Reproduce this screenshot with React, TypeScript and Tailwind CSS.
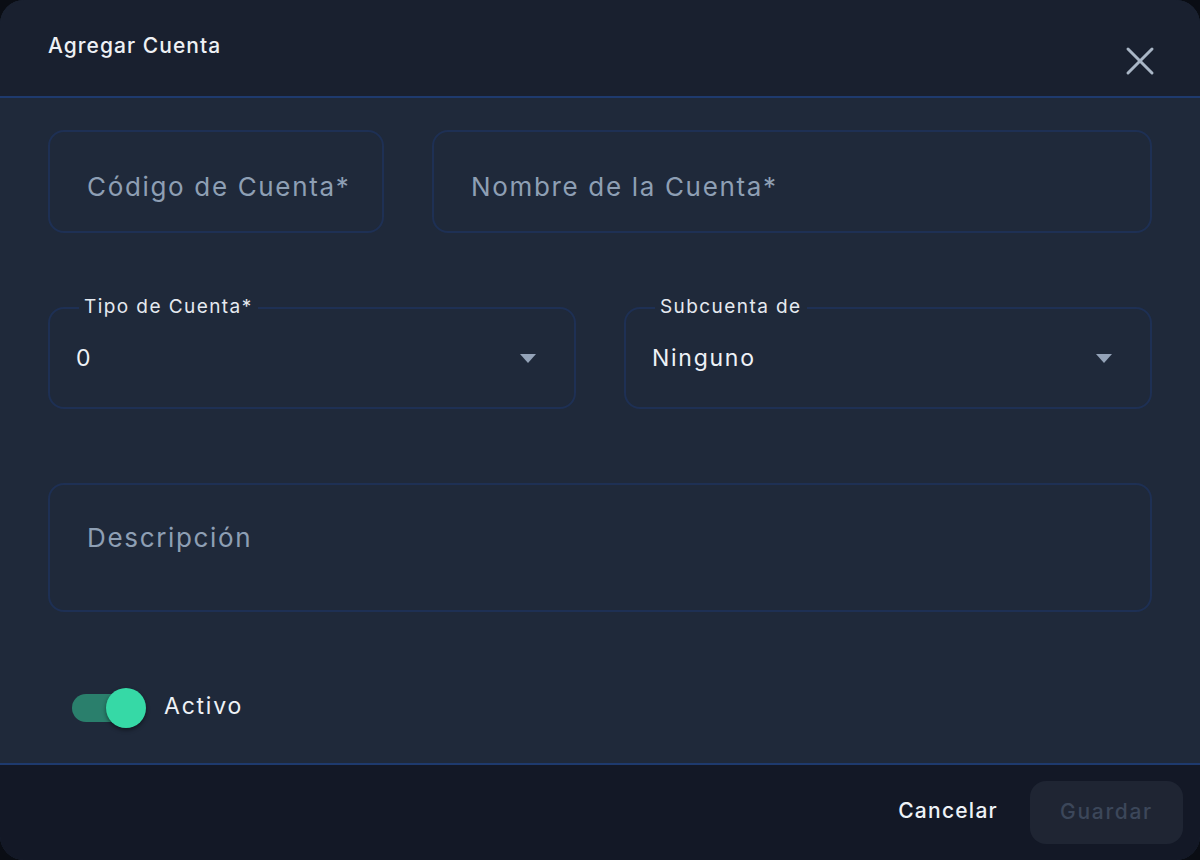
import { X } from 'lucide-react';

const font = { fontFamily: 'Inter, "DejaVu Sans", sans-serif' };

function Caret() {
  return (
    <svg width="16" height="9" viewBox="0 0 16 9" className="shrink-0">
      <path d="M0 0 L16 0 L8 9 Z" fill="#94a3b8" />
    </svg>
  );
}

function TextField({ label, className }: { label: string; className?: string }) {
  return (
    <div
      className={`flex h-[103px] items-center rounded-2xl border-2 border-[#1e3054] pl-[37px] pt-[10px] ${className ?? ''}`}
    >
      <span className="text-[26px] tracking-[0.064em] text-[#8e9fb4]">{label}</span>
    </div>
  );
}

function SelectField({ label, value }: { label: string; value: string }) {
  return (
    <div className="relative flex h-[102px] flex-1 items-center justify-between rounded-2xl border-2 border-[#1e3054] pl-[26px] pr-[38px]">
      <span className="absolute left-[29px] top-[-13px] bg-[#1f293a] px-[5px] text-[19px] leading-[22px] tracking-[0.075em] text-[#e5e9f0]">
        {label}
      </span>
      <span className="text-[23px] tracking-[0.075em] text-[#eef2f7]">{value}</span>
      <Caret />
    </div>
  );
}

export default function App() {
  return (
    <div className="h-[860px] w-[1200px] bg-[#0a0d14]" style={font}>
      <div className="flex h-full w-full flex-col overflow-hidden rounded-[24px] bg-[#1f293a]">
        {/* Header */}
        <div className="flex h-[98px] shrink-0 items-start justify-between border-b-2 border-[#1e3a6e] bg-[#19202f] pl-12 pr-[36px]">
          <h2 className="mt-[32px] text-[21px] font-medium leading-[28px] tracking-[0.05em] text-[#eef1f5]">
            Agregar Cuenta
          </h2>
          <button className="mt-[37px] text-[#a9b6c6]">
            <X className="h-12 w-12" strokeWidth={1.5} />
          </button>
        </div>

        {/* Body */}
        <div className="flex flex-1 flex-col px-12 pt-[32px]">
          <div className="flex gap-12">
            <TextField label="Código de Cuenta*" className="w-[336px] shrink-0" />
            <TextField label="Nombre de la Cuenta*" className="flex-1" />
          </div>

          <div className="mt-[74px] flex gap-12">
            <SelectField label="Tipo de Cuenta*" value="0" />
            <SelectField label="Subcuenta de" value="Ninguno" />
          </div>

          <div className="mt-[74px] flex h-[129px] items-start rounded-2xl border-2 border-[#1e3054] pl-[37px] pt-[33px]">
            <span className="text-[26px] tracking-[0.064em] text-[#8e9fb4]">Descripción</span>
          </div>

          <div className="mt-[76px] flex h-[40px] items-center gap-[18px] pl-[24px]">
            <div className="relative h-[28px] w-[68px]">
              <div className="h-full w-full rounded-full bg-[#2a7f6c]" />
              <div className="absolute -top-[6px] right-[-6px] h-[40px] w-[40px] rounded-full bg-[#36d9a6] shadow-[0_2px_4px_rgba(0,0,0,0.45)]" />
            </div>
            <span className="ml-[6px] pb-[3px] text-[23px] tracking-[0.077em] text-[#eef2f7]">Activo</span>
          </div>
        </div>

        {/* Footer */}
        <div className="flex h-[97px] shrink-0 items-center justify-end gap-8 border-t-2 border-[#1e3a6e] bg-[#131826] pr-[17px]">
          <button className="pb-[3px] text-[21px] font-medium tracking-[0.06em] text-[#eef2f7]">Cancelar</button>
          <button className="h-[63px] w-[153px] rounded-2xl bg-[#1f2533] pb-[2px] text-[21px] font-medium tracking-[0.08em] text-[#3c475a]">
            Guardar
          </button>
        </div>
      </div>
    </div>
  );
}
